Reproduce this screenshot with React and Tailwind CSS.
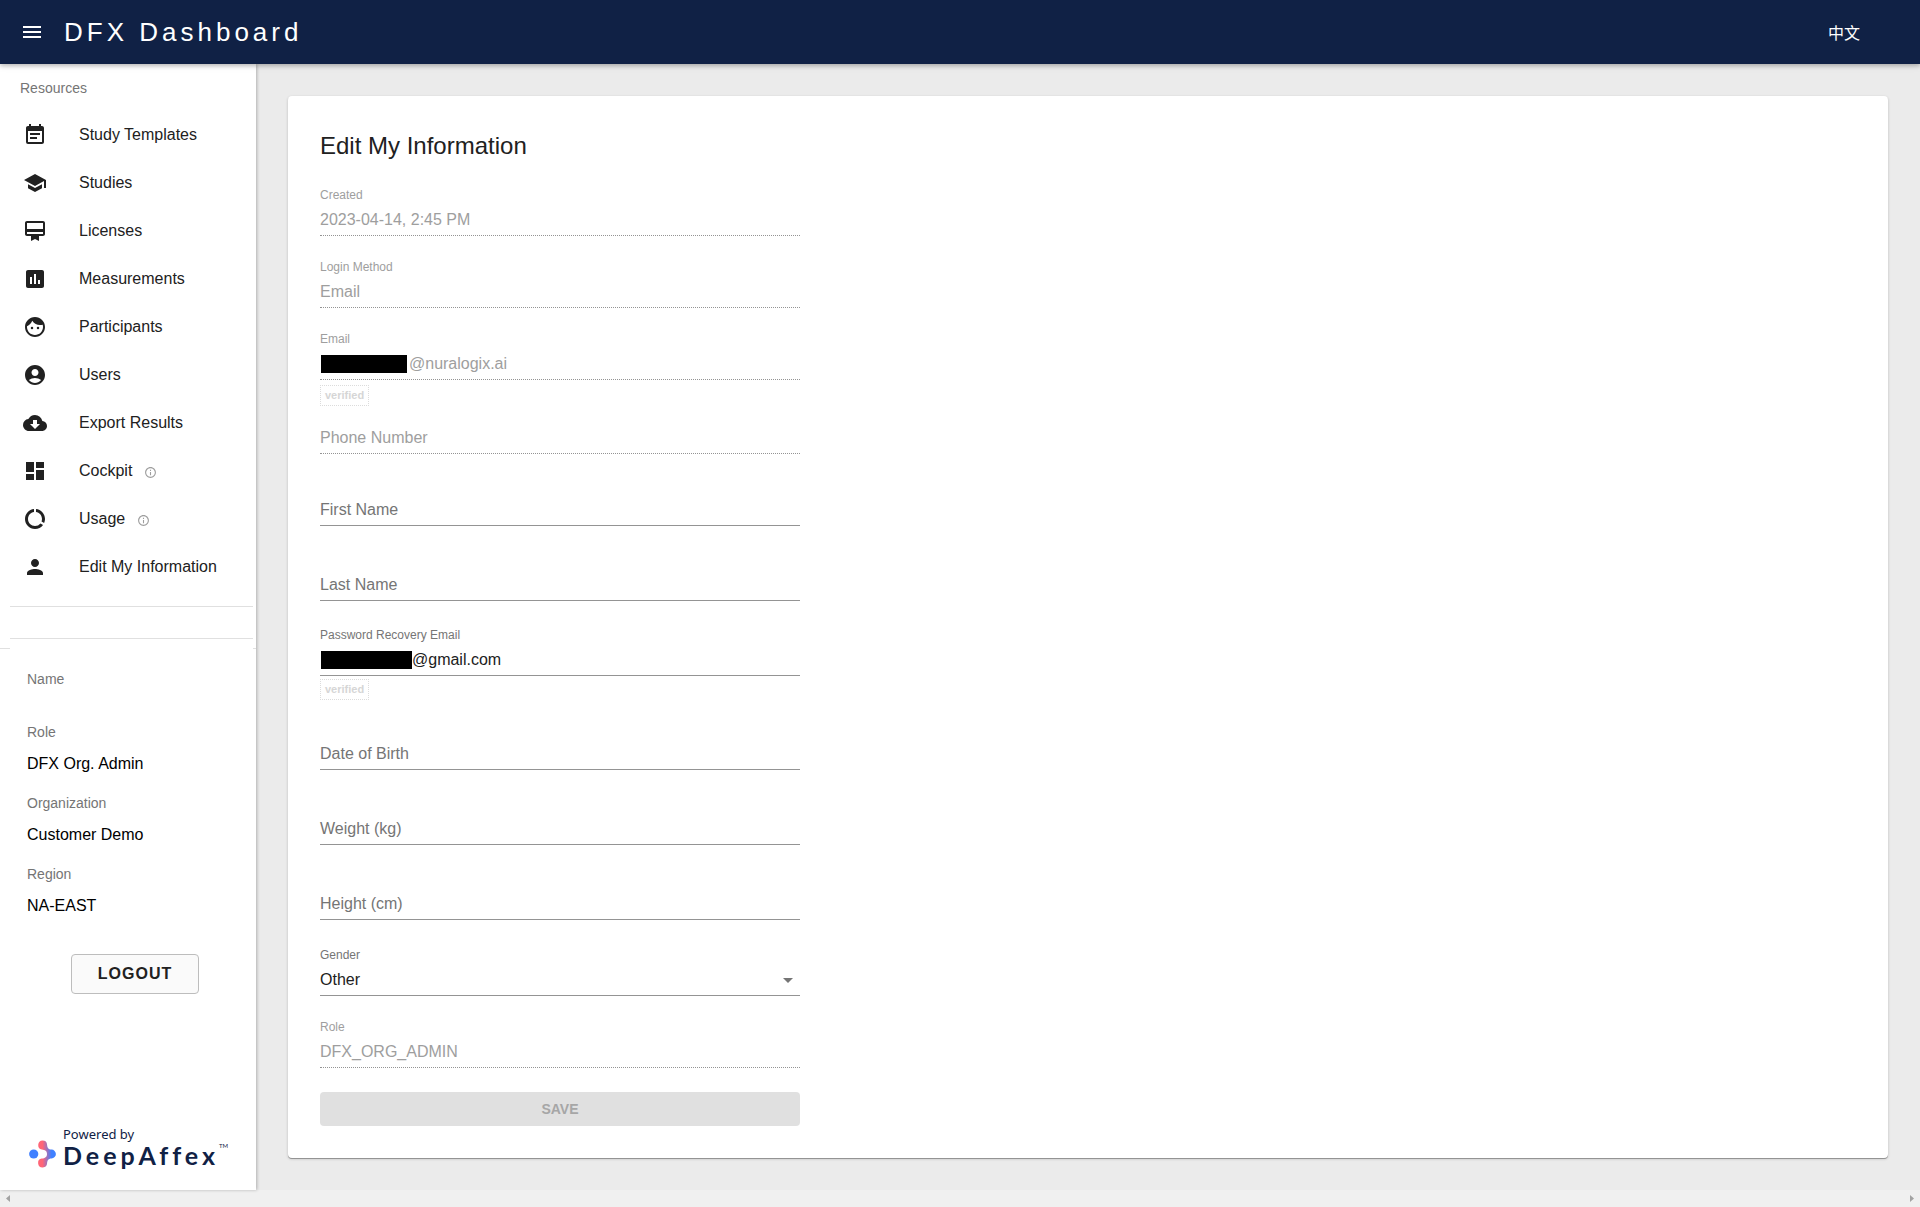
import React, { useState } from "react";
import {
  MdMenu, MdEventNote, MdSchool, MdCardMembership, MdAssessment, MdFace,
  MdAccountCircle, MdCloudDownload, MdDashboard, MdDataUsage, MdPerson,
  MdInfoOutline, MdArrowDropDown,
} from "react-icons/md";

const NAV = [
  { label: "Study Templates", Icon: MdEventNote },
  { label: "Studies", Icon: MdSchool },
  { label: "Licenses", Icon: MdCardMembership },
  { label: "Measurements", Icon: MdAssessment },
  { label: "Participants", Icon: MdFace },
  { label: "Users", Icon: MdAccountCircle },
  { label: "Export Results", Icon: MdCloudDownload },
  { label: "Cockpit", Icon: MdDashboard, info: true },
  { label: "Usage", Icon: MdDataUsage, info: true },
  { label: "Edit My Information", Icon: MdPerson },
];

function Header() {
  return (
    <header className="relative z-20 flex h-16 items-center bg-[#102145] pr-[60px] pl-5 text-white shadow-[0_2px_4px_rgba(0,0,0,0.2),0_1px_8px_rgba(0,0,0,0.12)]">
      <button type="button" aria-label="Toggle menu">
        <MdMenu size={24} />
      </button>
      <h1 className="ml-5 text-[26px] leading-8 tracking-[4px]">DFX Dashboard</h1>
      <button type="button" className="ml-auto font-['Noto_Sans_CJK_SC',sans-serif] text-base leading-6">
        中文
      </button>
    </header>
  );
}

function LogoMark() {
  return (
    <svg width="28" height="28" viewBox="0 0 28 28" aria-hidden="true">
      <defs>
        <linearGradient id="mark" x1="9" y1="0" x2="24" y2="0" gradientUnits="userSpaceOnUse">
          <stop offset="0.3" stopColor="#ff6577" />
          <stop offset="0.9" stopColor="#4080ff" />
        </linearGradient>
      </defs>
      <circle cx="4.700" cy="14" r="4.600" fill="#4080ff" />
      <path
        fill="url(#mark)"
        d="M13.500 0.500a4.600 4.600 0 0 1 4.600 4.400c.2 2.600 1.100 4.600 4.400 4.700a4.400 4.400 0 0 1 0 8.800c-3.300.1-4.200 2.100-4.400 4.700a4.500 4.500 0 1 1-5.300-4.500c3.200-.3 5.200-1.500 5.200-4.600s-2-4.300-5.200-4.600A4.500 4.500 0 0 1 13.500.5z"
      />
    </svg>
  );
}

function Account({ label, value }) {
  return (
    <div>
      <dt className="text-sm leading-5 text-[#757575]">{label}</dt>
      <dd className="mt-2.5 text-base leading-6 text-black">{value}</dd>
    </div>
  );
}

function Sidebar() {
  return (
    <aside className="z-10 flex w-64 shrink-0 flex-col bg-white shadow-[1px_0_3px_rgba(0,0,0,0.25)]">
      <h2 className="px-5 pt-3.5 pb-[13px] text-sm leading-5 text-[#757575]">Resources</h2>
      <nav>
        <ul>
          {NAV.map(({ label, Icon, info }) => (
            <li key={label}>
              <a href="#" className="flex h-12 items-center pl-[23px] text-base text-[#212121]">
                <Icon size={24} />
                <span className="ml-8">{label}</span>
                {info && <MdInfoOutline size={13} className="mt-0.5 ml-3 text-[#9e9e9e]" />}
              </a>
            </li>
          ))}
        </ul>
      </nav>
      <hr className="mt-[15px] mr-[3px] ml-2.5 border-[#e0e0e0]" />
      <hr className="mt-[31px] mr-[3px] ml-2.5 border-[#e0e0e0]" />
      <div className="mt-[9px] flex justify-between">
        <span className="h-px w-2.5 bg-[#e0e0e0]" />
        <span className="h-px w-[3px] bg-[#e0e0e0]" />
      </div>
      <dl className="flex flex-col gap-[17px] pt-5 pl-[27px]">
        <div className="h-9">
          <dt className="text-sm leading-5 text-[#757575]">Name</dt>
          <dd />
        </div>
        <Account label="Role" value="DFX Org. Admin" />
        <Account label="Organization" value="Customer Demo" />
        <Account label="Region" value="NA-EAST" />
      </dl>
      <button type="button" className="mt-9 ml-[71px] h-10 w-32 rounded border border-[#bdbdbd] bg-[#fafafa] text-base font-bold tracking-[1px] text-[#212121]">
        LOGOUT
      </button>
      <div className="mt-auto flex pb-[22px] pl-[29px] text-[#102145]">
        <div className="pt-3.5">
          <LogoMark />
        </div>
        <div className="ml-1.5">
          <p className="font-['Noto_Sans',sans-serif] text-[13px] leading-4">Powered by</p>
          <p className="flex font-['Lato',sans-serif] text-[25px] leading-[26px] font-bold tracking-[4px]">
            DeepAffex
            <sup className="mt-1 text-[6px] leading-none font-normal tracking-normal">TM</sup>
          </p>
        </div>
      </div>
    </aside>
  );
}

function Field({ id, label, value = "", disabled, mask, className = "mt-6" }) {
  const [text, setText] = useState(value);
  const line = disabled ? "border-dotted" : "border-solid";
  const labelColor = disabled ? "text-[#9e9e9e]" : "text-[#757575]";
  const inputColor = disabled ? "text-[#9e9e9e]" : "text-[#212121]";
  const filled = text !== "";
  return (
    <div className={className}>
      <div className="grid">
        <label
          htmlFor={id}
          className={`pointer-events-none [grid-area:1/1] ${labelColor} ${filled ? "text-xs leading-[14px]" : "mt-[22px] text-base leading-[19px]"}`}
        >
          {label}
        </label>
        <div className={`mt-4 flex h-8 items-center border-b border-[#949494] [grid-area:1/1] ${line}`}>
          {mask && <span className={`ml-px h-[18px] shrink-0 bg-black ${mask}`} />}
          <input
            id={id}
            value={text}
            onChange={(e) => setText(e.target.value)}
            disabled={disabled}
            className={`h-[19px] w-full min-w-0 bg-transparent text-base leading-[19px] outline-none ${inputColor}`}
          />
        </div>
      </div>
    </div>
  );
}

function Verified({ className }) {
  return (
    <p className={`flex ${className}`}>
      <span className="border border-dotted border-[#dcdcdc] px-1 text-[11px] leading-[19px] font-bold text-[#d6d6d6]">
        verified
      </span>
    </p>
  );
}

function Select() {
  return (
    <div className="mt-7">
      <label htmlFor="gender" className="block h-4 text-xs leading-[14px] text-[#757575]">Gender</label>
      <div className="grid h-8 items-center border-b border-[#949494]">
        <select id="gender" defaultValue="Other" className="w-full appearance-none bg-transparent text-base leading-5 text-[#212121] outline-none [grid-area:1/1]">
          <option>Other</option>
          <option>Male</option>
          <option>Female</option>
        </select>
        <MdArrowDropDown size={24} className="pointer-events-none justify-self-end text-[#757575] [grid-area:1/1]" />
      </div>
    </div>
  );
}

function EditForm() {
  return (
    <form className="w-full max-w-[480px]">
      <h2 className="text-2xl leading-9 text-[#212121]">Edit My Information</h2>
      <Field id="created" label="Created" value="2023-04-14, 2:45 PM" disabled />
      <Field id="login" label="Login Method" value="Email" disabled />
      <Field id="email" label="Email" value="@nuralogix.ai" mask="mr-0.5 w-[86px]" disabled />
      <Verified className="mt-[5px]" />
      <Field id="phone" label="Phone Number" disabled className="mt-0" />
      <Field id="first" label="First Name" />
      <Field id="last" label="Last Name" className="mt-[27px]" />
      <Field id="recovery" label="Password Recovery Email" value="@gmail.com" mask="w-[91px]" className="mt-[27px]" />
      <Verified className="mt-[3px]" />
      <Field id="dob" label="Date of Birth" className="mt-[22px]" />
      <Field id="weight" label="Weight (kg)" className="mt-[27px]" />
      <Field id="height" label="Height (cm)" className="mt-[27px]" />
      <Select />
      <Field id="role" label="Role" value="DFX_ORG_ADMIN" disabled />
      <button type="button" disabled className="mt-6 flex h-[34px] w-full items-center justify-center rounded bg-[#e0e0e0] text-sm leading-4 font-bold text-[#a6a6a6]">
        SAVE
      </button>
    </form>
  );
}

function ScrollBar() {
  return (
    <div className="flex h-[17px] items-center justify-between bg-[#f0f0f0] px-1.5 text-[#a3a3a3]" aria-hidden="true">
      <svg width="4" height="7" viewBox="0 0 4 7"><path d="M4 0v7L0 3.500z" fill="currentColor" /></svg>
      <svg width="4" height="7" viewBox="0 0 4 7"><path d="M0 0v7l4-3.500z" fill="currentColor" /></svg>
    </div>
  );
}

export default function App() {
  return (
    <div className="flex min-h-screen flex-col bg-[#ebebeb] font-['Liberation_Sans',Arial,sans-serif]">
      <Header />
      <div className="flex grow">
        <Sidebar />
        <main className="flex min-w-0 grow flex-col p-8">
          <section className="grow rounded bg-white p-8 shadow-[0_1px_0_#949494,0_1px_3px_rgba(0,0,0,0.2)]">
            <EditForm />
          </section>
        </main>
      </div>
      <ScrollBar />
    </div>
  );
}
